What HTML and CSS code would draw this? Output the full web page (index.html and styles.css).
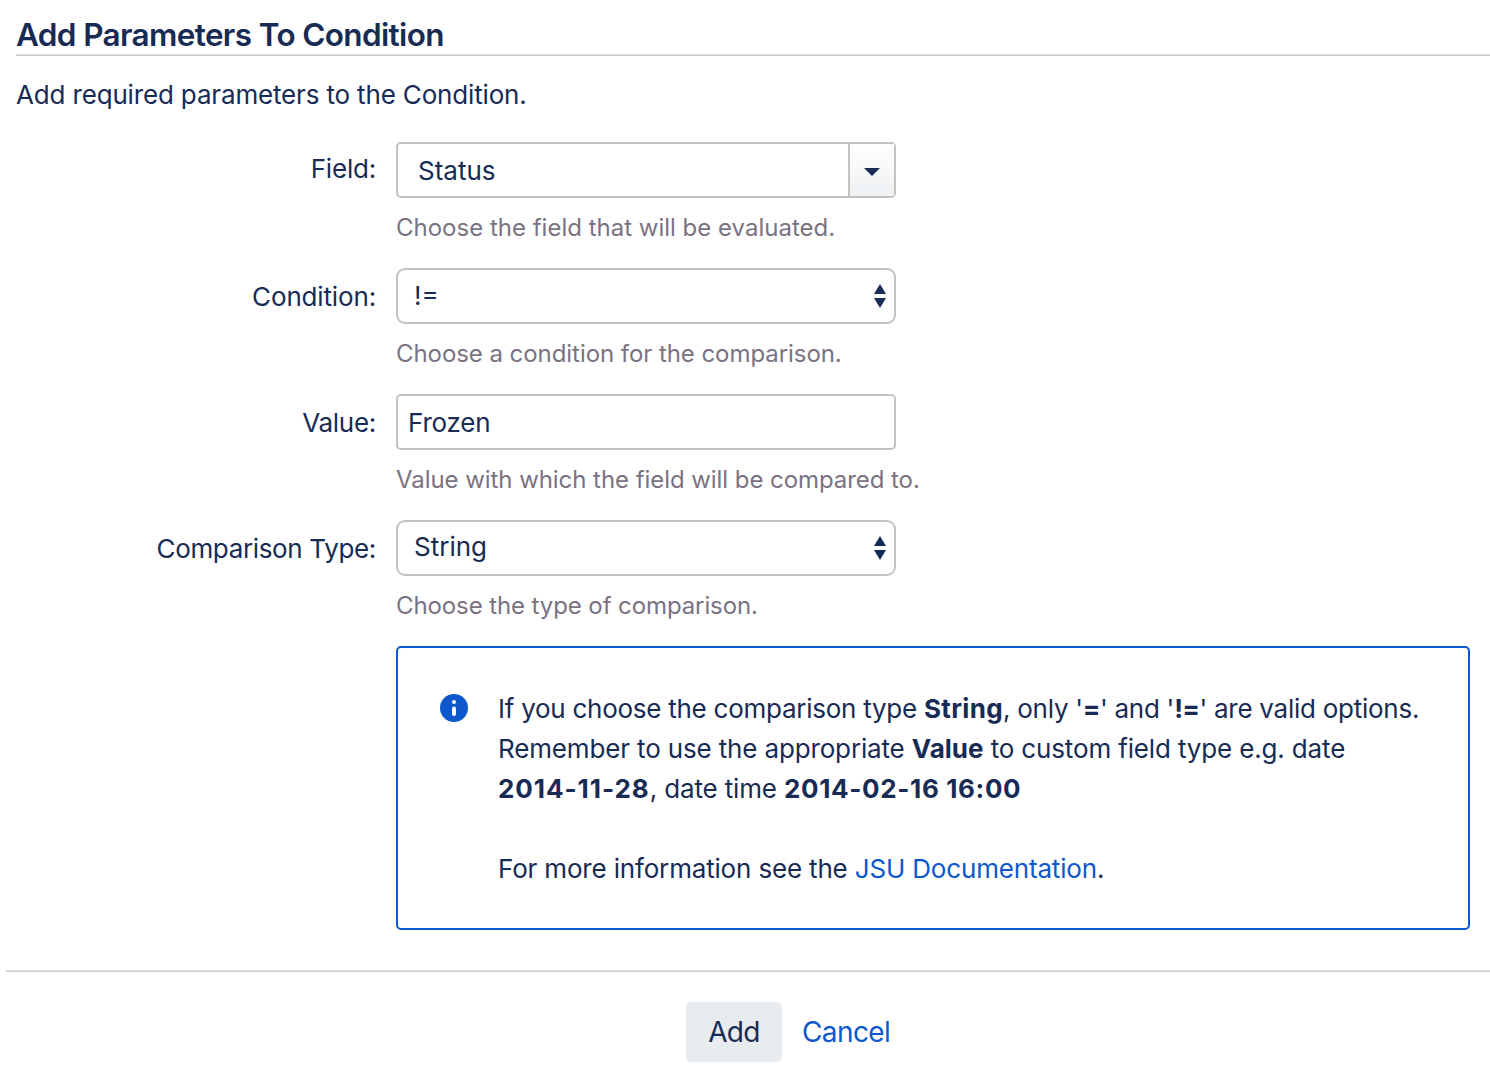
FILE: index.html
```html
<!DOCTYPE html>
<html lang="en">
<head>
<meta charset="utf-8">
<title>Add Parameters To Condition</title>
<link rel="stylesheet" href="styles.css">
</head>
<body>
<main class="page">
  <header class="header"><h1>Add Parameters To Condition</h1></header>
  <p class="intro">Add required parameters to the Condition.</p>
  <form class="form">
    <div class="row">
      <label class="label label-field">Field:</label>
      <div class="control combo"><span class="combo-value">Status</span><span class="combo-button"><svg width="16" height="8" viewBox="0 0 16 8"><path d="M0 0H16L8 8Z"/></svg></span></div>
      <p class="help help-field">Choose the field that will be evaluated.</p>
    </div>
    <div class="row">
      <label class="label">Condition:</label>
      <div class="control select select-condition"><span>!=</span><svg width="12" height="24" viewBox="0 0 12 24"><path d="M0 10L6 0L12 10ZM0 14H12L6 24Z"/></svg></div>
      <p class="help">Choose a condition for the comparison.</p>
    </div>
    <div class="row">
      <label class="label label-value">Value:</label>
      <div class="control input"><span>Frozen</span></div>
      <p class="help">Value with which the field will be compared to.</p>
    </div>
    <div class="row">
      <label class="label label-type">Comparison Type:</label>
      <div class="control select"><span>String</span><svg width="12" height="24" viewBox="0 0 12 24"><path d="M0 10L6 0L12 10ZM0 14H12L6 24Z"/></svg></div>
      <p class="help help-type">Choose the type of comparison.</p>
    </div>
    <section class="info">
      <svg class="info-icon" width="28" height="28" viewBox="0 0 28 28"><circle cx="14" cy="14" r="14" fill="#0f57cc"/><circle cx="14" cy="8" r="2" fill="#fff"/><path d="M14 14.5V20" stroke="#fff" stroke-width="4" stroke-linecap="round"/></svg>
      <div class="info-text">
        <p><span class="line-options">If you choose the comparison type <b class="wide">String</b>, only '<b class="operator">=</b>' and '<b class="operator">!=</b>' are valid options.</span><br>Remember to use the appropriate <b>Value</b> to custom field type e.g. date<br><b class="date">2014-11-28</b>, date time <b class="date-time">2014-02-16 16:00</b></p>
        <p class="more">For more information see the <a>JSU Documentation</a>.</p>
      </div>
    </section>
  </form>
  <footer class="actions"><button class="add" type="button">Add</button><a class="cancel">Cancel</a></footer>
</main>
</body>
</html>
```
FILE: styles.css
```css
* { box-sizing: border-box; }
body { margin: 0; background: #fff; color: #172b54; font: 26px/40px Inter, sans-serif; }
h1, p { margin: 0; }
.page { height: 1080px; overflow: hidden; }
.header { height: 56px; margin-left: 16px; padding-top: 15px; border-bottom: 1px solid #c9cccf; box-shadow: inset 0 -1px #dde3e7; }
h1 { font-size: 31.5px; line-height: 40px; font-weight: 600; letter-spacing: -0.64px; }
.intro { padding: 19px 0 0 16px; height: 86px; letter-spacing: -0.16px; }
.row { display: grid; grid-template-columns: 376px 500px; column-gap: 20px; grid-template-rows: 56px 70px; }
.label { text-align: right; padding-top: 9px; letter-spacing: -0.15px; }
.label-field { padding-top: 7px; letter-spacing: -0.2px; }
.label-value { letter-spacing: -0.3px; }
.label-type { letter-spacing: -0.34px; }
.help { grid-column: 2; padding-top: 10px; font-size: 24px; color: #7a7282; white-space: nowrap; letter-spacing: -0.06px; }
.help-field { letter-spacing: 0; }
.help-type { letter-spacing: -0.1px; }
.control { border: 2px solid #c6c1c3; border-radius: 5px; display: flex; align-items: center; }
.combo-value { flex: 1; padding: 2px 0 0 20px; }
.combo-button { width: 46px; align-self: stretch; border-left: 2px solid #c6c1c3; background: linear-gradient(#fff, #eef1f3); display: grid; place-items: center; padding: 3px 0 0; }
.select { border-radius: 9px; padding: 0 8px 2px 16px; justify-content: space-between; }
.select svg { position: relative; top: 1px; }
.select-condition span { padding-top: 2px; }
.input { padding: 2px 0 0 10px; letter-spacing: -0.2px; }
svg { fill: #172b54; display: block; }
.info { margin-left: 396px; width: 1074px; height: 284px; border: 2px solid #0f57cc; border-radius: 5px; padding: 41px 0 0 42px; display: flex; gap: 30px; }
.info-icon { margin-top: 5px; flex: none; }
.info-text { white-space: nowrap; letter-spacing: -0.15px; }
.info-text .more { margin-top: 40px; letter-spacing: -0.17px; }
.line-options { letter-spacing: -0.26px; }
b { font-weight: 700; letter-spacing: 0; }
.wide { letter-spacing: 0.35px; }
.operator { letter-spacing: -0.6px; }
.date { letter-spacing: 0.95px; }
.date-time { letter-spacing: 0.64px; }
a { color: #0f57cc; }
.actions { margin: 40px 0 0 6px; border-top: 1px solid #dde3e7; box-shadow: inset 0 1px #c9cccf; padding: 31px 0 0 680px; display: flex; gap: 20px; line-height: 60px; }
.add { width: 96px; height: 60px; padding: 0; border: 0; border-radius: 5px; background: #e9ecef; color: inherit; font: inherit; font-size: 28px; letter-spacing: -0.7px; }
.cancel { font-size: 28px; letter-spacing: -0.6px; }
```
